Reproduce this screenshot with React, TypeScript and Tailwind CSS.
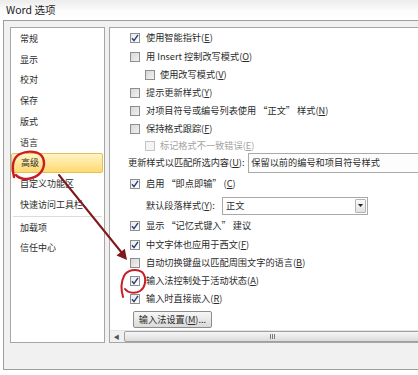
import React from "react";

function Box({ checked = false, disabled = false }: { checked?: boolean; disabled?: boolean }) {
  return (
    <span
      className={
        "flex h-[10px] w-[10px] shrink-0 items-center justify-center border " +
        (disabled
          ? "border-[#c4c4c4] bg-[#f4f4f4]"
          : checked
            ? "border-[#8e8e8e] bg-linear-to-br from-[#e9e9e9] to-[#ffffff]"
            : "border-[#8e8e8e] bg-linear-to-br from-[#d6d6d6] to-[#f2f2f2]")
      }
    >
      {checked && (
        <svg width="8" height="8" viewBox="0 0 8 8">
          <path d="M1 4.2 L3 6.6 L7 0.8" fill="none" stroke="#21407a" strokeWidth="1.4" />
        </svg>
      )}
    </span>
  );
}

function Check({
  h,
  indent = false,
  checked = false,
  disabled = false,
  children,
}: {
  h: string;
  indent?: boolean;
  checked?: boolean;
  disabled?: boolean;
  children: React.ReactNode;
}) {
  return (
    <div className={"flex items-center " + h + (indent ? " pl-[35px] gap-[5px]" : " pl-[20px] gap-[6px]")}>
      <Box checked={checked} disabled={disabled} />
      <span className={"whitespace-nowrap " + (disabled ? "text-[#a3a3a3]" : "")}>{children}</span>
    </div>
  );
}

function NavItem({ label, active = false }: { label: string; active?: boolean }) {
  return (
    <div
      className={
        "flex h-[20.75px] items-center pl-[9px] " +
        (active
          ? "mr-[1px] rounded-[2px] border border-[#e2be5c] bg-linear-to-b from-[#fff4c4] to-[#ffd96e] pl-[8px]"
          : "")
      }
    >
      {label}
    </div>
  );
}

export default function App() {
  return (
    <div className="relative h-[375px] w-[418px] overflow-hidden bg-white font-['Noto_Sans_CJK_SC','Liberation_Sans',sans-serif] leading-none text-[#2b2b2b]">
      {/* title bar */}
      <div className="flex h-[20px] items-center bg-linear-to-b from-[#ececec] via-[#fbfbfb] to-white pl-[6px] text-[10.5px] text-[#1e1e1e]">
        Word 选项
      </div>

      {/* dialog body */}
      <div className="ml-[3px] flex h-[350px] flex-col border-b border-l border-t border-[#9d9d9d] bg-[#f1f1f1] pl-[6px] pt-[6px]">
        <div className="flex h-[316px] gap-[4px]">
          {/* left navigation */}
          <div className="w-[95px] shrink-0 border border-[#a6a6a6] bg-white text-[9px]">
            <NavItem label="常规" />
            <NavItem label="显示" />
            <NavItem label="校对" />
            <NavItem label="保存" />
            <NavItem label="版式" />
            <NavItem label="语言" />
            <NavItem label="高级" active />
            <NavItem label="自定义功能区" />
            <NavItem label="快速访问工具栏" />
            <div className="mx-[2px] my-[1px] h-px bg-[#dcdcdc]" />
            <div className="flex h-[20px] items-center pl-[9px]">加载项</div>
            <div className="flex h-[20px] items-center pl-[9px]">信任中心</div>
          </div>

          {/* right content */}
          <div className="flex w-[330px] shrink-0 flex-col border border-[#a6a6a6] bg-white text-[9.2px]">
            <div className="h-[302px] pt-[1px]">
              <Check h="h-[18px]" checked>
                使用智能指针(<u>E</u>)
              </Check>
              <Check h="h-[19px]">
                用 Insert 控制改写模式(<u>O</u>)
              </Check>
              <Check h="h-[18px]" indent>
                使用改写模式(<u>V</u>)
              </Check>
              <Check h="h-[18px]">
                提示更新样式(<u>Y</u>)
              </Check>
              <Check h="h-[18px]">
                对项目符号或编号列表使用 “正文” 样式(<u>N</u>)
              </Check>
              <Check h="h-[18px]">
                保持格式跟踪(<u>F</u>)
              </Check>
              <Check h="h-[15px]" indent disabled>
                标记格式不一致错误(<u>E</u>)
              </Check>
              <div className="flex h-[20px] items-center pl-[18px]">
                <span className="w-[127px] whitespace-nowrap">
                  更新样式以匹配所选内容(<u>U</u>):
                </span>
                <div className="flex h-[20px] w-[200px] items-center border border-[#a9a9a9] bg-[#fdfdfd] pl-[2px] whitespace-nowrap">
                  保留以前的编号和项目符号样式
                </div>
              </div>
              <Check h="h-[22px]" checked>
                启用 “即点即输” (<u>C</u>)
              </Check>
              <div className="flex h-[21px] items-center pl-[36px]">
                <span className="w-[76px] whitespace-nowrap">
                  默认段落样式(<u>Y</u>):
                </span>
                <div className="flex h-[18px] w-[146px] items-center justify-between border border-[#a9a9a9] bg-white pl-[3px] pr-[1px]">
                  <span>正文</span>
                  <span className="flex h-[14px] w-[11px] items-center justify-center rounded-[1px] border border-[#b5b5b5] bg-linear-to-b from-[#fafafa] to-[#e2e2e2]">
                    <svg width="5" height="3" viewBox="0 0 5 3">
                      <path d="M0 0 H5 L2.5 3 Z" fill="#222" />
                    </svg>
                  </span>
                </div>
              </div>
              <Check h="h-[20px]" checked>
                显示 “记忆式键入” 建议
              </Check>
              <Check h="h-[18px]" checked>
                中文字体也应用于西文(<u>F</u>)
              </Check>
              <Check h="h-[18px]">
                自动切换键盘以匹配周围文字的语言(<u>B</u>)
              </Check>
              <Check h="h-[18px]" checked>
                输入法控制处于活动状态(<u>A</u>)
              </Check>
              <Check h="h-[18px]" checked>
                输入时直接嵌入(<u>R</u>)
              </Check>
              <div className="mt-[3px] pl-[23px]">
                <button className="flex h-[17px] w-[79px] items-center justify-center rounded-[2px] border border-[#8d8d8d] bg-linear-to-b from-[#f7f7f7] to-[#dadada] text-[9.2px] text-[#2b2b2b]">
                  输入法设置(<u>M</u>)...
                </button>
              </div>
            </div>

            {/* horizontal scrollbar */}
            <div className="flex h-[12px] items-stretch border-t border-[#e4e4e4] bg-[#f0f0f0]">
              <div className="flex w-[13px] items-center justify-center text-[6px] text-[#555]">◀</div>
              <div className="ml-[1px] flex w-[296px] items-center justify-center rounded-[2px] border border-[#a0a0a0] bg-linear-to-b from-[#f6f6f6] to-[#dcdcdc]">
                <span className="flex gap-[1px]">
                  <span className="h-[5px] w-px bg-[#7a7a7a]" />
                  <span className="h-[5px] w-px bg-[#7a7a7a]" />
                  <span className="h-[5px] w-px bg-[#7a7a7a]" />
                </span>
              </div>
            </div>
          </div>
        </div>
      </div>

      {/* red hand-drawn annotations */}
      <svg className="pointer-events-none absolute inset-0" width="418" height="375" viewBox="0 0 418 375">
        <path
          d="M14 177 C12 168 12 158 20 154 C28 150 40 151 43 158 C46 166 42 175 32 178 C26 180 19 179 16 175"
          fill="none"
          stroke="#c81d25"
          strokeWidth="2.4"
          strokeLinecap="round"
        />
        <path d="M59 175 L122 253" stroke="#7e1a1c" strokeWidth="2" strokeLinecap="round" />
        <path d="M127 260 L116.5 255.5 L124.8 248.8 Z" fill="#7e1a1c" />
        <path
          d="M123 297 C121 290 121 282 124 276 C127 270 136 268 142 272 C147 277 146 287 140 291 C135 294 128 293 125 289"
          fill="none"
          stroke="#c81d25"
          strokeWidth="2"
          strokeLinecap="round"
        />
      </svg>
    </div>
  );
}
